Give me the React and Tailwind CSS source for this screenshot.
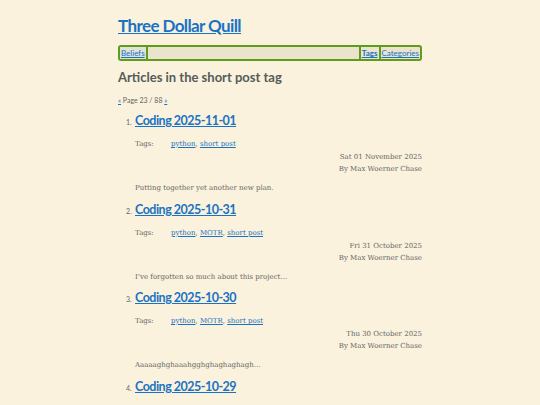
const posts = [
    { title: 'Coding 2025-11-01', tags: ['python', 'short post'], date: 'Sat 01 November 2025', excerpt: 'Putting together yet another new plan.' },
    { title: 'Coding 2025-10-31', tags: ['python', 'MOTR', 'short post'], date: 'Fri 31 October 2025', excerpt: 'I\u2019ve forgotten so much about this project\u2026' },
    { title: 'Coding 2025-10-30', tags: ['python', 'MOTR', 'short post'], date: 'Thu 30 October 2025', excerpt: 'Aaaaaghghaaahgghghaghaghagh\u2026' },
    { title: 'Coding 2025-10-29', tags: ['python', 'short post'], date: 'Wed 29 October 2025', excerpt: 'More work.' },
];

const head = { fontFamily: 'Lato, "Noto Sans", sans-serif' };
const body = { fontFamily: '"DejaVu Serif", "Liberation Serif", serif' };

export default function App() {
    return (
        <div className="h-[405px] overflow-hidden bg-[#faf2dc]">
            <div className="w-[304px] ml-[118px] pt-[14px]">
                <h1 style={head} className="text-[17px] leading-[24px] font-bold text-[#1a72c4] underline tracking-[-0.6px]">
                    <a href="#">Three Dollar Quill</a>
                </h1>

                <nav style={head} className="mt-[7px] h-[16px] flex items-stretch border-2 border-[#5f9b1c] rounded-[3px] bg-[#ebe4cd] text-[8px] text-[#1a72c4]">
                    <a href="#" className="px-[1px] flex items-center underline bg-[#dfe2d6] border-r-2 border-[#5f9b1c]">Beliefs</a>
                    <div className="flex-1"></div>
                    <a href="#" className="px-[1px] flex items-center font-bold underline border-l-2 border-r-2 border-[#5f9b1c]">Tags</a>
                    <a href="#" className="px-[1px] flex items-center underline">Categories</a>
                </nav>

                <h2 style={head} className="mt-[7px] text-[13px] leading-[18px] font-bold text-[#555c5a]">
                    Articles in the short post tag
                </h2>

                <p style={head} className="mt-[9px] text-[7px] leading-[10px] text-[#666]">
                    <a href="#" className="underline text-[#1a72c4]">«</a> Page 23 / 88 <a href="#" className="underline text-[#1a72c4]">»</a>
                </p>

                <ol className="mt-[8px] pl-[17px]">
                    {posts.map((p, i) => (
                        <li key={p.title} className="h-[88.5px]">
                            <div className="flex items-baseline">
                                <span style={head} className="w-0 -ml-[9px] mr-[9px] text-[7px] text-[#666]">{i + 1}.</span>
                                <a href="#" style={head} className="text-[12.5px] leading-[16px] font-bold text-[#1a72c4] underline tracking-[-0.5px]">{p.title}</a>
                            </div>
                            <div style={body} className="text-[#666] text-[7px]">
                                <div className="mt-[10px] flex leading-[10px]">
                                    <span className="w-[36px]">Tags:</span>
                                    <span>
                                        {p.tags.map((t, j) => (
                                            <span key={t}>
                                                <a href="#" className="underline text-[#1a72c4]">{t}</a>
                                                {j < p.tags.length - 1 ? ', ' : ''}
                                            </span>
                                        ))}
                                    </span>
                                </div>
                                <div className="mt-[2px] text-right leading-[12px]">{p.date}</div>
                                <div className="text-right leading-[12px]">By Max Woerner Chase</div>
                                <p className="mt-[7px] leading-[12px]">{p.excerpt}</p>
                            </div>
                        </li>
                    ))}
                </ol>
            </div>
        </div>
    );
}
